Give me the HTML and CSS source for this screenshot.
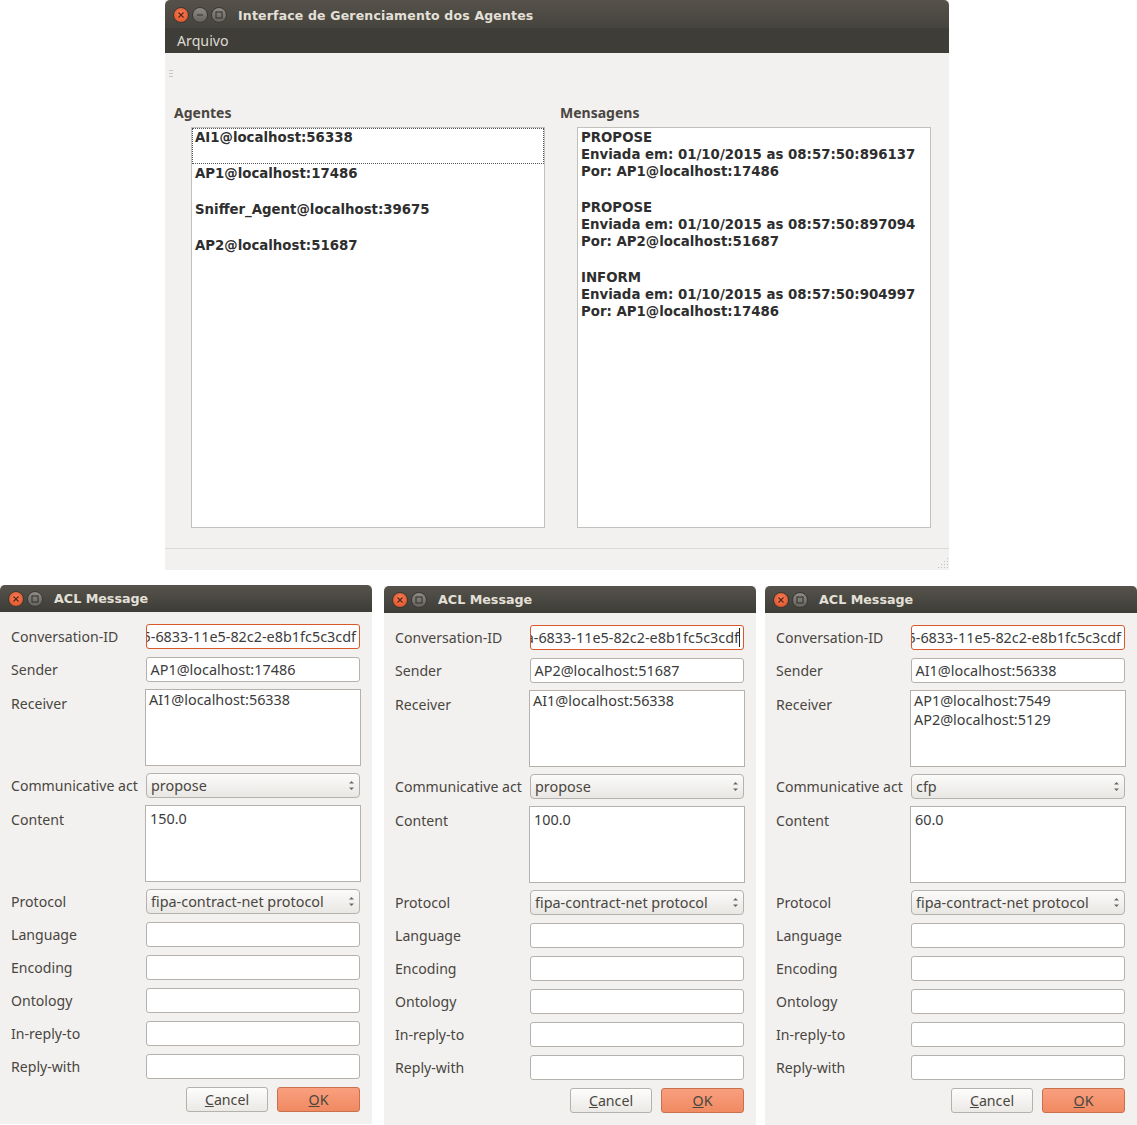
FILE: index.html
```html
<!DOCTYPE html>
<html lang="pt">
<head>
<meta charset="utf-8">
<title>Interface de Gerenciamento dos Agentes</title>
<link rel="stylesheet" href="styles.css">
</head>
<body>
<section class="window main-window">
  <header class="titlebar main-title">
    <span class="wbtn close"><svg viewBox="0 0 8 8"><path d="M1.5 1.5l5 5M6.5 1.5l-5 5"/></svg></span>
    <span class="wbtn grey"><svg viewBox="0 0 8 8"><path d="M1 4h6"/></svg></span>
    <span class="wbtn grey"><svg viewBox="0 0 8 8"><rect x="1" y="1" width="6" height="6"/></svg></span>
    <span class="title-text main-title-text">Interface de Gerenciamento dos Agentes</span>
  </header>
  <nav class="menubar"><span>Arquivo</span></nav>
  <div class="toolbar"><span class="gripper"></span></div>
  <div class="panels">
    <div class="panel">
      <h2>Agentes</h2>
      <ul class="list">
        <li class="current">AI1@localhost:56338</li>
        <li>AP1@localhost:17486</li>
        <li>Sniffer_Agent@localhost:39675</li>
        <li>AP2@localhost:51687</li>
      </ul>
    </div>
    <div class="panel">
      <h2>Mensagens</h2>
      <div class="messages">
        <p>PROPOSE<br>Enviada em: 01/10/2015 as 08:57:50:896137<br>Por: AP1@localhost:17486</p>
        <p>PROPOSE<br>Enviada em: 01/10/2015 as 08:57:50:897094<br>Por: AP2@localhost:51687</p>
        <p>INFORM<br>Enviada em: 01/10/2015 as 08:57:50:904997<br>Por: AP1@localhost:17486</p>
      </div>
    </div>
  </div>
  <footer class="statusbar"><span class="grip"></span></footer>
</section>

<section class="window dialog d1">
  <header class="titlebar dlg-title">
    <span class="wbtn close"><svg viewBox="0 0 8 8"><path d="M1.5 1.5l5 5M6.5 1.5l-5 5"/></svg></span>
    <span class="wbtn grey"><svg viewBox="0 0 8 8"><rect x="1" y="1" width="6" height="6"/></svg></span>
    <span class="title-text dlg-title-text">ACL Message</span>
  </header>
  <div class="form">
    <label>Conversation-ID</label><div class="field focus"><span>5-6833-11e5-82c2-e8b1fc5c3cdf</span></div>
    <label>Sender</label><div class="field"><span>AP1@localhost:17486</span></div>
    <label class="top">Receiver</label><div class="area"><span>AI1@localhost:56338</span></div>
    <label>Communicative act</label><div class="combo"><span>propose</span><svg viewBox="0 0 5 11"><path d="M2.5 1L5 3.5H0zM2.5 10L0 7.5H5z"/></svg></div>
    <label class="top">Content</label><div class="area content"><span>150.0</span></div>
    <label>Protocol</label><div class="combo"><span>fipa-contract-net protocol</span><svg viewBox="0 0 5 11"><path d="M2.5 1L5 3.5H0zM2.5 10L0 7.5H5z"/></svg></div>
    <label>Language</label><div class="field"></div>
    <label>Encoding</label><div class="field"></div>
    <label>Ontology</label><div class="field"></div>
    <label>In-reply-to</label><div class="field"></div>
    <label>Reply-with</label><div class="field"></div>
  </div>
  <div class="buttons"><button class="btn"><u>C</u>ancel</button><button class="btn ok"><u>O</u>K</button></div>
</section>

<section class="window dialog d2">
  <header class="titlebar dlg-title">
    <span class="wbtn close"><svg viewBox="0 0 8 8"><path d="M1.5 1.5l5 5M6.5 1.5l-5 5"/></svg></span>
    <span class="wbtn grey"><svg viewBox="0 0 8 8"><rect x="1" y="1" width="6" height="6"/></svg></span>
    <span class="title-text dlg-title-text">ACL Message</span>
  </header>
  <div class="form">
    <label>Conversation-ID</label><div class="field focus"><span class="caret">a-6833-11e5-82c2-e8b1fc5c3cdf</span></div>
    <label>Sender</label><div class="field"><span>AP2@localhost:51687</span></div>
    <label class="top">Receiver</label><div class="area"><span>AI1@localhost:56338</span></div>
    <label>Communicative act</label><div class="combo"><span>propose</span><svg viewBox="0 0 5 11"><path d="M2.5 1L5 3.5H0zM2.5 10L0 7.5H5z"/></svg></div>
    <label class="top">Content</label><div class="area content"><span>100.0</span></div>
    <label>Protocol</label><div class="combo"><span>fipa-contract-net protocol</span><svg viewBox="0 0 5 11"><path d="M2.5 1L5 3.5H0zM2.5 10L0 7.5H5z"/></svg></div>
    <label>Language</label><div class="field"></div>
    <label>Encoding</label><div class="field"></div>
    <label>Ontology</label><div class="field"></div>
    <label>In-reply-to</label><div class="field"></div>
    <label>Reply-with</label><div class="field"></div>
  </div>
  <div class="buttons"><button class="btn"><u>C</u>ancel</button><button class="btn ok"><u>O</u>K</button></div>
</section>

<section class="window dialog d3">
  <header class="titlebar dlg-title">
    <span class="wbtn close"><svg viewBox="0 0 8 8"><path d="M1.5 1.5l5 5M6.5 1.5l-5 5"/></svg></span>
    <span class="wbtn grey"><svg viewBox="0 0 8 8"><rect x="1" y="1" width="6" height="6"/></svg></span>
    <span class="title-text dlg-title-text">ACL Message</span>
  </header>
  <div class="form">
    <label>Conversation-ID</label><div class="field focus"><span>5-6833-11e5-82c2-e8b1fc5c3cdf</span></div>
    <label>Sender</label><div class="field"><span>AI1@localhost:56338</span></div>
    <label class="top">Receiver</label><div class="area"><span>AP1@localhost:7549<br>AP2@localhost:5129</span></div>
    <label>Communicative act</label><div class="combo"><span>cfp</span><svg viewBox="0 0 5 11"><path d="M2.5 1L5 3.5H0zM2.5 10L0 7.5H5z"/></svg></div>
    <label class="top">Content</label><div class="area content"><span>60.0</span></div>
    <label>Protocol</label><div class="combo"><span>fipa-contract-net protocol</span><svg viewBox="0 0 5 11"><path d="M2.5 1L5 3.5H0zM2.5 10L0 7.5H5z"/></svg></div>
    <label>Language</label><div class="field"></div>
    <label>Encoding</label><div class="field"></div>
    <label>Ontology</label><div class="field"></div>
    <label>In-reply-to</label><div class="field"></div>
    <label>Reply-with</label><div class="field"></div>
  </div>
  <div class="buttons"><button class="btn"><u>C</u>ancel</button><button class="btn ok"><u>O</u>K</button></div>
</section>
</body>
</html>
```
FILE: styles.css
```css
* { box-sizing: border-box; }
html, body { margin: 0; padding: 0; }
body {
  position: relative;
  width: 1137px;
  height: 1125px;
  overflow: hidden;
  background: #fff;
  font-family: "Noto Sans", "Open Sans", sans-serif;
  font-size: 14.2px;
  color: #3c3c3c;
}
.window { position: absolute; background: #f2f1f0; }
.main-window { left: 165px; top: 0; width: 784px; height: 570px; display: flex; flex-direction: column; }
.d1 { left: 0; top: 585px; width: 372px; height: 539px; }
.d2 { left: 384px; top: 586px; width: 372px; height: 539px; }
.d3 { left: 765px; top: 586px; width: 372px; height: 539px; }

.titlebar {
  display: flex;
  align-items: center;
  border-radius: 5px 5px 0 0;
  color: #e4e0d8;
}
.main-title {
  height: 28px;
  padding: 2px 0 0 8px;
  gap: 3px;
  background: linear-gradient(#56524b, #46443e);
}
.dlg-title {
  height: 27px;
  padding-left: 8px;
  gap: 3px;
  background: linear-gradient(#56534c, #3d3c37);
}
.wbtn {
  width: 16px;
  height: 16px;
  border-radius: 50%;
  display: flex;
  align-items: center;
  justify-content: center;
  flex: none;
  border: 1px solid #3a3834;
}
.wbtn svg { width: 8px; height: 8px; fill: none; stroke-width: 1.2; }
.close { background: radial-gradient(circle at 50% 40%, #f5805a, #dc4a1e); }
.close svg { stroke: #5a2412; }
.grey { background: linear-gradient(#8e8b84, #66635c); }
.grey svg { stroke: #3b3a36; }
.title-text { font-family: "DejaVu Sans", sans-serif; font-weight: 700; white-space: nowrap; }
.main-title-text { font-size: 12.5px; margin-left: 8px; letter-spacing: 0.17px; }
.dlg-title-text { font-size: 12.7px; margin: 0 0 0 8px; }

.menubar {
  height: 25px;
  padding: 0 12px;
  background: #3e3d38;
  color: #dfdbd2;
  line-height: 25px;
}
.toolbar { height: 42px; padding: 17px 0 0 4px; }
.gripper {
  display: block;
  width: 4px;
  height: 8px;
  background: repeating-linear-gradient(#c9c7c3 0 1px, transparent 1px 3px);
}
.panels { flex: 1; display: flex; padding-left: 9px; }
.panel { width: 386px; display: flex; flex-direction: column; }
.panel h2 {
  margin: 0;
  height: 32px;
  padding-top: 9px;
  font-size: 14px;
  line-height: 18px;
  font-weight: 700;
  color: #4a4640;
}
.list, .messages {
  margin: 0 0 0 17px;
  width: 354px;
  height: 401px;
  background: #fff;
  border: 1px solid #c2c0bc;
  list-style: none;
  font-family: "DejaVu Sans", sans-serif;
  font-weight: 700;
  font-size: 13.33px;
  color: #2e2e2e;
}
.list { padding: 0; }
.list li { height: 36px; padding: 1px 3px 0; line-height: 17px; }
.list li.current { outline: 1px dotted #555; outline-offset: -1px; }
.messages { padding: 1px 3px; line-height: 17px; white-space: nowrap; }
.messages p { margin: 0 0 19px; }
.statusbar {
  height: 22px;
  position: relative;
  border-top: 1px solid #dcdad6;
}
.grip {
  position: absolute;
  right: 1px;
  bottom: 2px;
  width: 11px;
  height: 11px;
  background: radial-gradient(circle, #c4c2be 0.6px, transparent 0.8px) 0 0 / 3px 3px;
  clip-path: polygon(100% 0, 100% 100%, 0 100%);
}

.form {
  display: grid;
  grid-template-columns: 135px 214px;
  grid-template-rows: 26px 25px 77px 25px 77px 26px 26px 26px 26px 26px 26px;
  row-gap: 7px;
  padding: 12px 0 0 11px;
  align-items: start;
}
.form label { color: #4a4640; white-space: nowrap; font-size: 14.1px; line-height: 25px; }
.form label.top { padding-top: 2px; }
.field, .combo, .area { font-size: 14.4px; }
.field {
  height: 25px;
  background: #fff;
  border: 1px solid #b5b2ad;
  border-radius: 3px;
  padding: 0 3px 0 3.5px;
  display: flex;
  align-items: center;
  overflow: hidden;
  white-space: nowrap;
  color: #3c3c3c;
}
.field.focus {
  border-color: #d8572b;
  justify-content: flex-end;
}
.field span { flex: none; }
.field .caret { border-right: 1px solid #222; }
.area {
  height: 77px;
  margin: 0 -1px;
  background: #fff;
  border: 1px solid #b5b2ad;
  padding: 0 3px;
  line-height: 19px;
  color: #3c3c3c;
}
.area.content { padding: 3px 4px 0; }
.combo {
  height: 25px;
  border: 1px solid #b5b2ad;
  border-radius: 4px;
  background: linear-gradient(#fbfbfa, #e9e7e4);
  display: flex;
  align-items: center;
  justify-content: space-between;
  padding: 0 5px 0 4px;
  white-space: nowrap;
  color: #4a4640;
}
.combo svg { width: 5px; height: 11px; fill: #6a6863; }
.buttons {
  display: flex;
  justify-content: flex-end;
  gap: 9px;
  width: 360px;
  margin-top: 7px;
}
.btn {
  width: 82px;
  height: 25px;
  padding: 0;
  border: 1px solid #b5b2ad;
  border-radius: 3px;
  background: linear-gradient(#fdfdfc, #ebe9e6);
  font: inherit;
  color: #4a4640;
}
.btn.ok {
  width: 83px;
  border-color: #c9704d;
  background: linear-gradient(#f99f7e, #f08a62);
}
```
